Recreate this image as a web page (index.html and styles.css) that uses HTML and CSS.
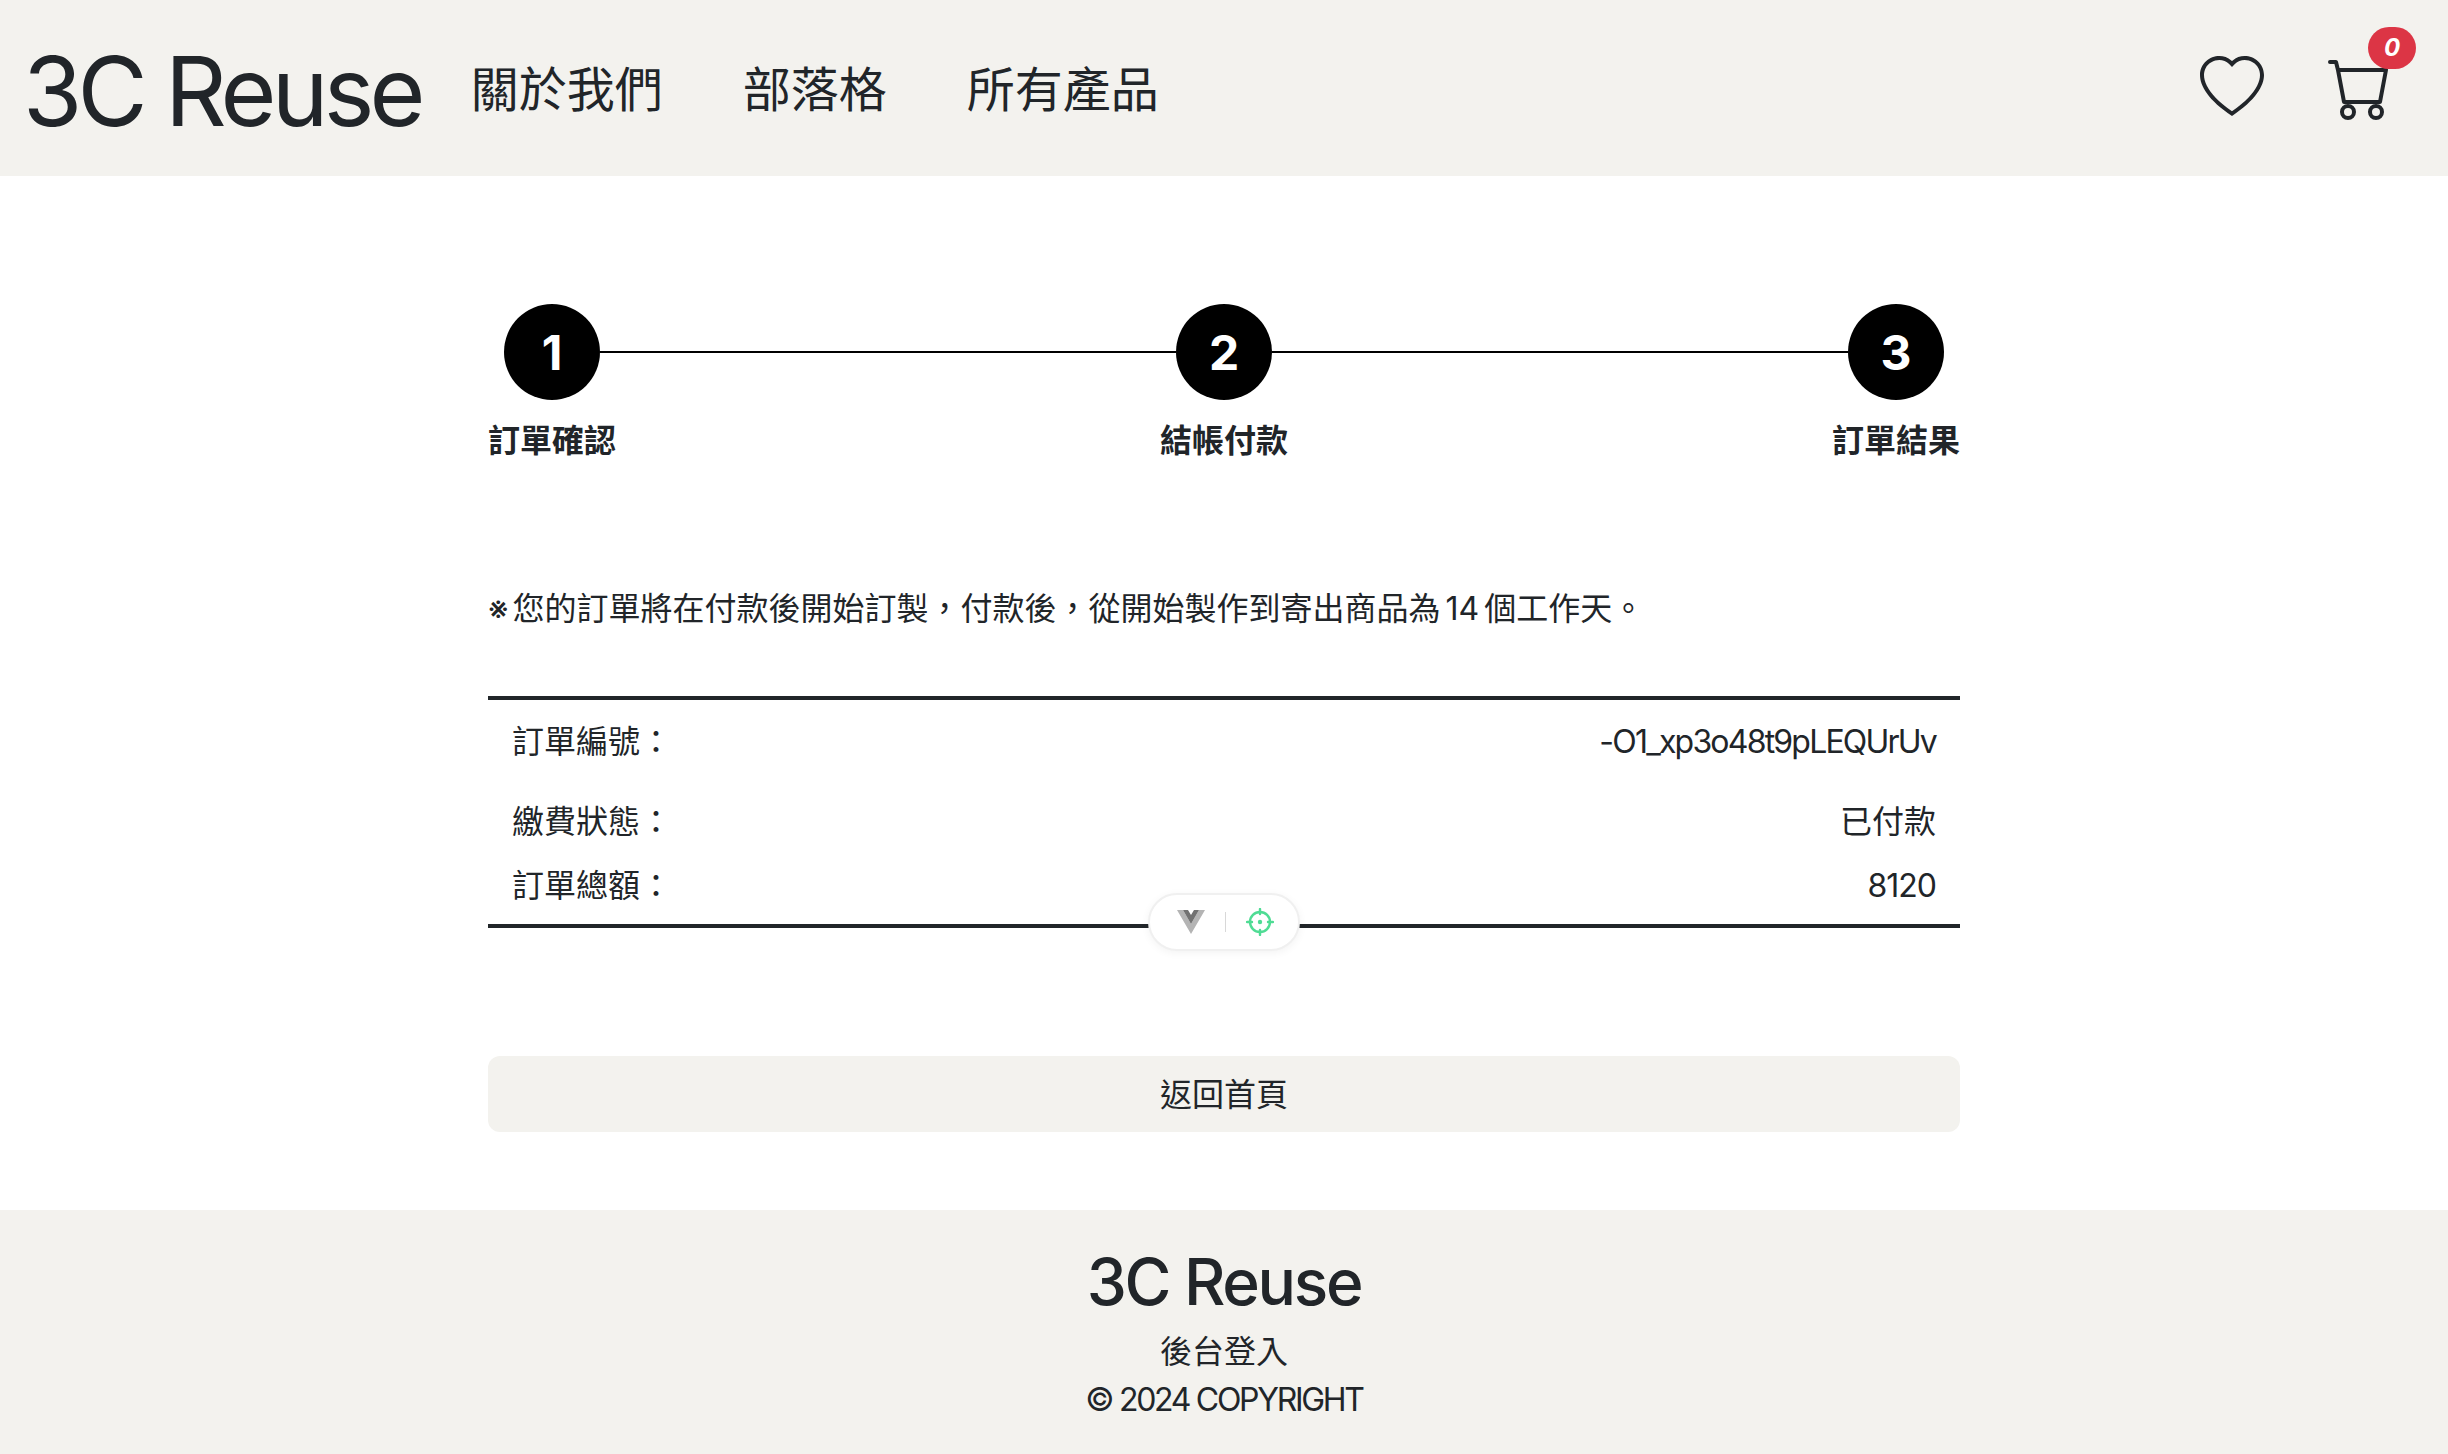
FILE: index.html
```html
<!DOCTYPE html>
<html lang="zh-Hant">
<head>
<meta charset="utf-8">
<title>3C Reuse</title>
<link rel="stylesheet" href="styles.css">
</head>
<body>
<nav class="topbar">
  <a class="brand" href="#">3C Reuse</a>
  <ul class="menu">
    <li><a href="#">關於我們</a></li>
    <li><a href="#">部落格</a></li>
    <li><a href="#">所有產品</a></li>
  </ul>
  <div class="actions">
    <a href="#" class="action">
      <svg class="icon" viewBox="0 0 16 16" fill="currentColor"><path d="m8 2.748-.717-.737C5.6.281 2.514.878 1.4 3.053c-.523 1.023-.641 2.5.314 4.385.92 1.815 2.834 3.989 6.286 6.357 3.452-2.368 5.365-4.542 6.286-6.357.955-1.886.838-3.362.314-4.385C13.486.878 10.4.28 8.717 2.01zM8 15C-7.333 4.868 3.279-3.04 7.824 1.143q.09.083.176.171a3 3 0 0 1 .176-.17C12.72-3.042 23.333 4.867 8 15"/></svg>
    </a>
    <a href="#" class="action">
      <svg class="icon" viewBox="0 0 16 16" fill="currentColor"><path d="M0 1.5A.5.5 0 0 1 .5 1H2a.5.5 0 0 1 .485.379L2.89 3H14.5a.5.5 0 0 1 .491.592l-1.5 8A.5.5 0 0 1 13 12H4a.5.5 0 0 1-.491-.408L2.01 3.607 1.61 2H.5a.5.5 0 0 1-.5-.5M3.102 4l1.313 7h8.17l1.313-7zM5 12a2 2 0 1 0 0 4 2 2 0 0 0 0-4m7 0a2 2 0 1 0 0 4 2 2 0 0 0 0-4m-7 1a1 1 0 1 1 0 2 1 1 0 0 1 0-2m7 0a1 1 0 1 1 0 2 1 1 0 0 1 0-2"/></svg>
      <span class="badge">0</span>
    </a>
  </div>
</nav>

<main class="content">
  <div class="steps">
    <div class="step">
      <span class="step-num">1</span>
      <span class="step-name">訂單確認</span>
    </div>
    <span class="step-line"></span>
    <div class="step">
      <span class="step-num">2</span>
      <span class="step-name">結帳付款</span>
    </div>
    <span class="step-line"></span>
    <div class="step">
      <span class="step-num">3</span>
      <span class="step-name">訂單結果</span>
    </div>
  </div>

  <p class="notice"><span class="mark">※</span>您的訂單將在付款後開始訂製，付款後，從開始製作到寄出商品為 14 個工作天。</p>

  <div class="summary">
    <div class="row row-first"><span>訂單編號：</span><span class="value">-O1_xp3o48t9pLEQUrUv</span></div>
    <div class="row row-second"><span>繳費狀態：</span><span>已付款</span></div>
    <div class="row row-third"><span>訂單總額：</span><span class="total">8120</span></div>
  </div>

  <a href="#" class="home-btn">返回首頁</a>
</main>

<footer class="footer">
  <div class="footer-brand">3C Reuse</div>
  <a href="#" class="footer-link">後台登入</a>
  <div class="copyright">© 2024 COPYRIGHT</div>
</footer>

<div class="devtools">
  <svg class="vue-mark" viewBox="0 0 28 24"><path fill="#b4b4b4" d="M0 0h6l8 14L22 0h6L14 24z"/><path fill="#727272" d="M6 0h5l3 5 3-5h5l-8 14z"/></svg>
  <span class="devtools-sep"></span>
  <svg class="target" viewBox="0 0 28 28" fill="none" stroke="#4fdc94" stroke-width="2.4"><circle cx="14" cy="14" r="10"/><path d="M14 1v5M14 22v5M1 14h5M22 14h5" stroke-linecap="round"/><circle cx="14" cy="14" r="2.2" fill="#4fdc94" stroke="none"/></svg>
</div>
</body>
</html>
```

FILE: styles.css
```css
* {
	box-sizing: border-box;
}
html, body {
	margin: 0;
	padding: 0;
}
body {
	position: relative;
	height: 1454px;
	overflow: hidden;
	font-family: Inter, "Noto Sans CJK TC", sans-serif;
	font-size: 32px;
	line-height: 48px;
	color: #212529;
	background-color: #FFFFFF;
}
a {
	color: inherit;
	text-decoration: none;
}

/* top nav */
.topbar {
	display: flex;
	align-items: center;
	height: 176px;
	padding: 0 24px 0 23px;
	background-color: #F3F2EE;
}
.brand {
	font-size: 96px;
	line-height: 120px;
	letter-spacing: -4.8px;
	margin-right: 50px;
	padding-top: 5px;
}
.menu {
	display: flex;
	gap: 80px;
	list-style: none;
	margin: 0;
	padding: 4px 0 0;
	font-size: 48px;
	line-height: 72px;
}
.actions {
	display: flex;
	gap: 64px;
	margin-left: auto;
	padding-right: 32px;
}
.action {
	position: relative;
	display: block;
	width: 64px;
	height: 64px;
}
.icon {
	display: block;
	width: 64px;
	height: 64px;
}
.badge {
	position: absolute;
	left: 40px;
	top: -29px;
	width: 48px;
	height: 42px;
	border-radius: 21px;
	background-color: #DC3545;
	color: #FFFFFF;
	font-size: 24px;
	line-height: 42px;
	font-weight: 700;
	font-style: italic;
	text-align: center;
}

/* steps */
.content {
	width: 1472px;
	margin: 0 auto;
}
.steps {
	display: flex;
	align-items: flex-start;
	padding-top: 128px;
}
.step {
	display: flex;
	flex-direction: column;
	align-items: center;
	width: 128px;
	flex: none;
}
.step-num {
	width: 96px;
	height: 96px;
	border-radius: 50%;
	background-color: #000000;
	color: #FFFFFF;
	font-size: 48px;
	line-height: 98px;
	font-weight: 700;
	text-align: center;
}
.step-name {
	margin-top: 17px;
	font-weight: 700;
	white-space: nowrap;
}
.step-line {
	flex: 1;
	height: 2px;
	margin: 47px -16px 0;
	background-color: #000000;
}

.notice {
	margin: 120px 0 0;
	word-spacing: -4px;
}
.mark {
	margin-right: 4px;
}

/* order summary */
.summary {
	margin-top: 63px;
	height: 232px;
	padding: 0 24px;
	border-top: 4px solid #212529;
	border-bottom: 4px solid #212529;
}
.row {
	display: flex;
	justify-content: space-between;
}
.value {
	letter-spacing: -1.8px;
}
.total {
	letter-spacing: -1px;
}
.row-first {
	margin-top: 18px;
}
.row-second {
	margin-top: 32px;
}
.row-third {
	margin-top: 16px;
}

.home-btn {
	display: block;
	margin-top: 128px;
	height: 76px;
	border-radius: 12px;
	background-color: #F3F2EE;
	font-size: 32px;
	line-height: 78px;
	text-align: center;
}

/* footer */
.footer {
	display: flex;
	flex-direction: column;
	align-items: center;
	margin-top: 78px;
	height: 244px;
	padding-top: 32px;
	background-color: #F3F2EE;
}
.footer-brand {
	font-size: 64px;
	line-height: 80px;
	font-weight: 500;
	letter-spacing: -2.3px;
}
.footer-link {
	margin-top: 6px;
}
.copyright {
	letter-spacing: -2.3px;
}

/* devtools pill over the bottom rule */
.devtools {
	position: absolute;
	left: 1148px;
	top: 893px;
	display: flex;
	align-items: center;
	justify-content: center;
	gap: 20px;
	width: 152px;
	height: 58px;
	padding-left: 2px;
	border: 2px solid #F0F0F0;
	border-radius: 29px;
	background-color: #FFFFFF;
	box-shadow: 0 2px 8px rgba(0, 0, 0, 0.05);
}
.vue-mark {
	width: 28px;
	height: 24px;
}
.devtools-sep {
	width: 1px;
	height: 20px;
	background-color: #D8D8D8;
}
.target {
	width: 28px;
	height: 28px;
}
```
